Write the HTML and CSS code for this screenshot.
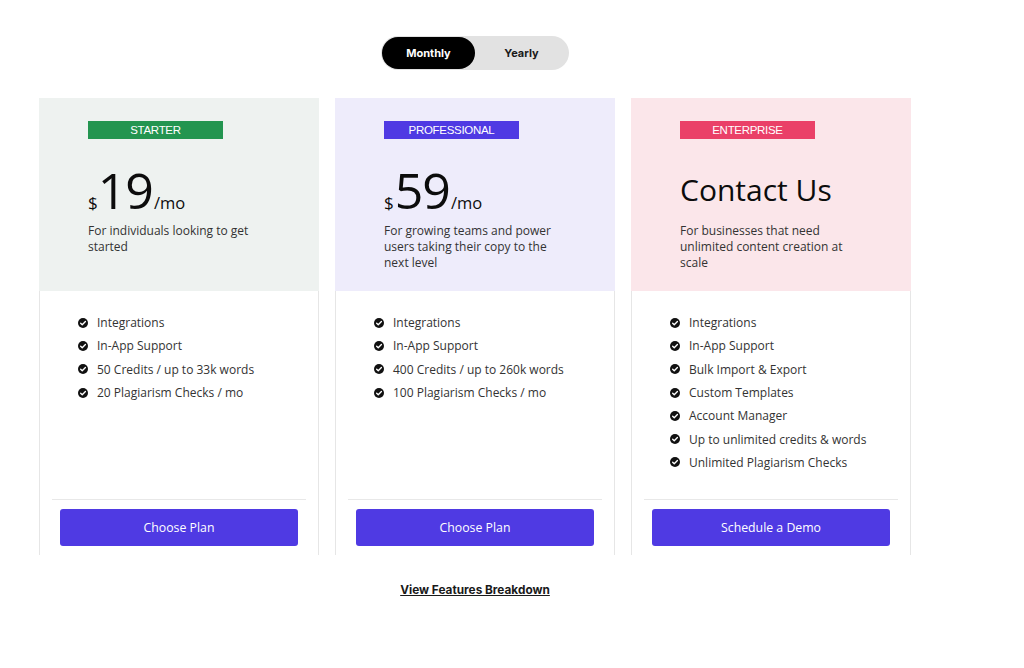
FILE: index.html
```html
<!DOCTYPE html>
<html>
<head>
<meta charset="utf-8">
<link rel="stylesheet" href="styles.css">
</head>
<body>
<div class="wrap">
  <div class="toggle-row">
    <div class="toggle">
      <span class="opt active">Monthly</span>
      <span class="opt">Yearly</span>
    </div>
  </div>
  <div class="cards">
    <div class="card">
      <div class="head head-starter">
        <div class="badge badge-starter">STARTER</div>
        <div class="price"><span class="cur">$</span><span class="amt">19</span><span class="per">/mo</span></div>
        <p class="desc">For individuals looking to get<br>started</p>
      </div>
      <ul class="features">
        <li><svg class="chk" viewBox="0 0 12 12"><circle cx="6" cy="6" r="6"/><path d="M3.2 6.2l1.9 1.9 3.8-4" /></svg>Integrations</li>
        <li><svg class="chk" viewBox="0 0 12 12"><circle cx="6" cy="6" r="6"/><path d="M3.2 6.2l1.9 1.9 3.8-4" /></svg>In-App Support</li>
        <li><svg class="chk" viewBox="0 0 12 12"><circle cx="6" cy="6" r="6"/><path d="M3.2 6.2l1.9 1.9 3.8-4" /></svg>50 Credits / up to 33k words</li>
        <li><svg class="chk" viewBox="0 0 12 12"><circle cx="6" cy="6" r="6"/><path d="M3.2 6.2l1.9 1.9 3.8-4" /></svg>20 Plagiarism Checks / mo</li>
      </ul>
      <div class="foot"><button class="btn">Choose Plan</button></div>
    </div>
    <div class="card">
      <div class="head head-pro">
        <div class="badge badge-pro">PROFESSIONAL</div>
        <div class="price"><span class="cur tight">$</span><span class="amt">59</span><span class="per">/mo</span></div>
        <p class="desc">For growing teams and power<br>users taking their copy to the<br>next level</p>
      </div>
      <ul class="features">
        <li><svg class="chk" viewBox="0 0 12 12"><circle cx="6" cy="6" r="6"/><path d="M3.2 6.2l1.9 1.9 3.8-4" /></svg>Integrations</li>
        <li><svg class="chk" viewBox="0 0 12 12"><circle cx="6" cy="6" r="6"/><path d="M3.2 6.2l1.9 1.9 3.8-4" /></svg>In-App Support</li>
        <li><svg class="chk" viewBox="0 0 12 12"><circle cx="6" cy="6" r="6"/><path d="M3.2 6.2l1.9 1.9 3.8-4" /></svg>400 Credits / up to 260k words</li>
        <li><svg class="chk" viewBox="0 0 12 12"><circle cx="6" cy="6" r="6"/><path d="M3.2 6.2l1.9 1.9 3.8-4" /></svg>100 Plagiarism Checks / mo</li>
      </ul>
      <div class="foot"><button class="btn">Choose Plan</button></div>
    </div>
    <div class="card">
      <div class="head head-ent">
        <div class="badge badge-ent">ENTERPRISE</div>
        <div class="contact">Contact Us</div>
        <p class="desc">For businesses that need<br>unlimited content creation at<br>scale</p>
      </div>
      <ul class="features">
        <li><svg class="chk" viewBox="0 0 12 12"><circle cx="6" cy="6" r="6"/><path d="M3.2 6.2l1.9 1.9 3.8-4" /></svg>Integrations</li>
        <li><svg class="chk" viewBox="0 0 12 12"><circle cx="6" cy="6" r="6"/><path d="M3.2 6.2l1.9 1.9 3.8-4" /></svg>In-App Support</li>
        <li><svg class="chk" viewBox="0 0 12 12"><circle cx="6" cy="6" r="6"/><path d="M3.2 6.2l1.9 1.9 3.8-4" /></svg>Bulk Import &amp; Export</li>
        <li><svg class="chk" viewBox="0 0 12 12"><circle cx="6" cy="6" r="6"/><path d="M3.2 6.2l1.9 1.9 3.8-4" /></svg>Custom Templates</li>
        <li><svg class="chk" viewBox="0 0 12 12"><circle cx="6" cy="6" r="6"/><path d="M3.2 6.2l1.9 1.9 3.8-4" /></svg>Account Manager</li>
        <li><svg class="chk" viewBox="0 0 12 12"><circle cx="6" cy="6" r="6"/><path d="M3.2 6.2l1.9 1.9 3.8-4" /></svg>Up to unlimited credits &amp; words</li>
        <li><svg class="chk" viewBox="0 0 12 12"><circle cx="6" cy="6" r="6"/><path d="M3.2 6.2l1.9 1.9 3.8-4" /></svg>Unlimited Plagiarism Checks</li>
      </ul>
      <div class="foot"><button class="btn">Schedule a Demo</button></div>
    </div>
  </div>
  <div class="link-row"><a class="link" href="#">View Features Breakdown</a></div>
</div>
</body>
</html>
```

FILE: styles.css
```css
html, body { margin: 0; padding: 0; background: #fff; }
body { font-family: "Open Sans", "Liberation Sans", sans-serif; color: #333; }
.wrap { width: 872px; margin-left: 39px; padding-top: 36px; }
.toggle-row { display: flex; justify-content: center; }
.toggle {
  display: flex; width: 188px; height: 34px; box-sizing: border-box;
  background: #e2e2e2; border-radius: 17px; padding: 1px;
  font-family: Inter, "Liberation Sans", sans-serif; font-weight: 700; font-size: 11px;
}
.opt { flex: 1; display: flex; align-items: center; justify-content: center; border-radius: 16px; color: #1a1a1a; }
.opt.active { background: #000; color: #fff; }
.cards { display: flex; gap: 16px; margin-top: 28px; }
.card {
  width: 280px; height: 457px; box-sizing: border-box;
  border-left: 1px solid #e6e6e6; border-right: 1px solid #e6e6e6;
  display: flex; flex-direction: column;
}
.head { height: 193px; box-sizing: border-box; padding: 23px 0 0 49px; margin: 0 -1px; }
.head-starter { background: #eef2f0; }
.head-pro { background: #eeecfb; }
.head-ent { background: #fbe6ea; }
.badge {
  width: 135px; height: 18px; display: flex; align-items: center; justify-content: center;
  font-family: "Liberation Sans", Arial, sans-serif; font-size: 11.5px; color: #fff; letter-spacing: -0.3px;
}
.badge-starter { background: #239550; }
.badge-pro { background: #4f3ae3; }
.badge-ent { background: #ea4068; }
.price { display: flex; align-items: baseline; margin-top: 25px; height: 52px; line-height: 52px; color: #0c0c0c; }
.cur { font-size: 17px; margin-right: 0; }
.cur.tight { margin-right: 1px; }
.amt { font-size: 50px; letter-spacing: -1px; }
.per { font-size: 16.5px; margin-left: 1px; }
.contact { margin-top: 25px; height: 52px; line-height: 52px; font-size: 30px; color: #0c0c0c; }
.desc { margin: 7px 0 0; font-size: 12px; line-height: 16px; color: #333; }
.features { list-style: none; margin: 0; padding: 20px 0 0 38px; flex: 1; }
.features li { display: flex; align-items: center; height: 23.3px; font-size: 12px; color: #333; }
.chk { width: 10px; height: 10px; margin-right: 9px; }
.chk circle { fill: #111; }
.chk path { fill: none; stroke: #fff; stroke-width: 1.6; stroke-linecap: round; stroke-linejoin: round; }
.foot { margin: 0 12px; border-top: 1px solid #e8e8e8; padding: 9px 8px; }
.btn {
  display: block; width: 238px; height: 37px; border: 0; border-radius: 3px;
  background: #4f3ae3; color: #fff; font-family: "Open Sans", "Liberation Sans", sans-serif;
  font-size: 12.3px; cursor: pointer;
}
.link-row { display: flex; justify-content: center; margin-top: 28px; }
.link { font-family: Inter, "Liberation Sans", sans-serif; font-weight: 700; font-size: 11.8px; color: #1a1a1a; text-decoration: underline; }
```
